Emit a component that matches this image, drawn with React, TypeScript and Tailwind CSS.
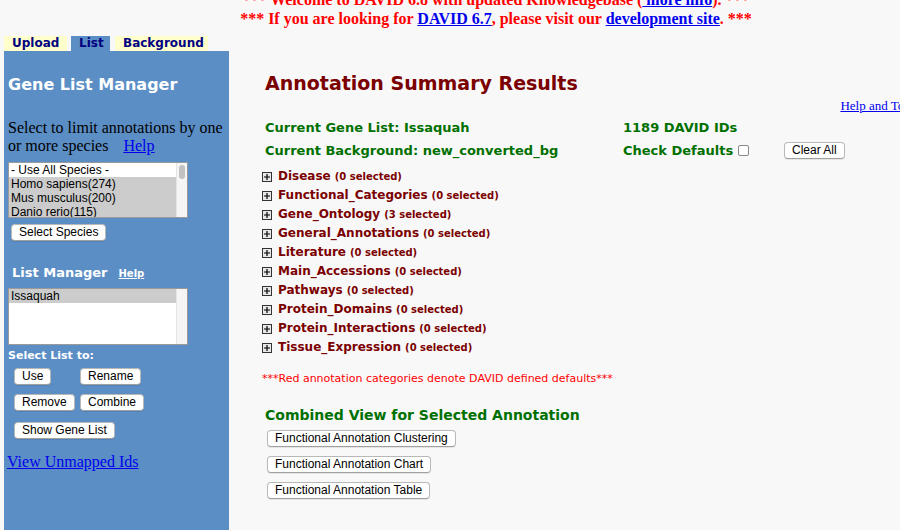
import React from "react";

const verdana = "font-['Verdana','DejaVu_Sans',sans-serif]";
const serif = "font-['Liberation_Serif','Times_New_Roman',serif]";
const helv = "font-['Liberation_Sans','Helvetica',sans-serif]";

const categories = [
  ["Disease", 0],
  ["Functional_Categories", 0],
  ["Gene_Ontology", 3],
  ["General_Annotations", 0],
  ["Literature", 0],
  ["Main_Accessions", 0],
  ["Pathways", 0],
  ["Protein_Domains", 0],
  ["Protein_Interactions", 0],
  ["Tissue_Expression", 0],
] as const;

function Btn({ label, className = "" }: { label: string; className?: string }) {
  return (
    <button
      className={`${helv} h-[17px] px-[7px] text-[12px] leading-[15px] font-normal text-black bg-white border border-[#b8b8b8] border-b-[#a0a0a0] rounded-[4px] shadow-[0_1px_0_rgba(0,0,0,0.08)] ${className}`}
    >
      {label}
    </button>
  );
}

function PlusBox() {
  return (
    <svg width="10" height="10" viewBox="0 0 10 10" className="shrink-0 self-center">
      <rect x="0.5" y="0.5" width="9" height="9" fill="#e8e8e8" stroke="#333" />
      <path d="M2 5h6M5 2v6" stroke="#000" strokeWidth="1.2" />
    </svg>
  );
}

export default function App() {
  return (
    <div className="w-[900px] h-[530px] overflow-hidden bg-[#f8f8f8] relative">
      {/* header notice */}
      <div className={`${serif} font-bold text-[16px] leading-[19px] text-[#ff0000] ml-[240px] w-[512px] text-center whitespace-nowrap -mt-[10px] h-[38px]`}>
        <div>
          *** Welcome to DAVID 6.8 with updated Knowledgebase (
          <a className="text-[#0000ee] underline"> more info</a>). ***
        </div>
        <div>
          *** If you are looking for <a className="text-[#0000ee] underline">DAVID 6.7</a>, please visit our{" "}
          <a className="text-[#0000ee] underline">development site</a>. ***
        </div>
      </div>

      <div className="flex mt-[8px]">
        {/* sidebar */}
        <div className="ml-[4px] w-[225px] shrink-0">
          <div className={`${verdana} flex items-end h-[15px] font-bold text-[12px] leading-[15px] text-[#000080]`}>
            <div className="bg-[#ffffcc] w-[63px] h-[15px] pl-[8px]">Upload</div>
            <div className="w-[4px]" />
            <div className="bg-[#5b8ec5] w-[39px] h-[15px] pl-[8px]">List</div>
            <div className="w-[5px]" />
            <div className="bg-[#ffffcc] w-[93px] h-[15px] pl-[8px]">Background</div>
          </div>
          <div className="bg-[#5b8ec5] h-[480px] pt-[24px]">
            <div className={`${verdana} font-bold text-[16px] leading-[20px] text-white pl-[4px]`}>Gene List Manager</div>
            <div className={`${serif} text-[16px] leading-[18px] text-black pl-[4px] mt-[24px]`}>
              Select to limit annotations by one
              <br />
              or more species
              <a className="text-[#0000ee] underline ml-[15px]">Help</a>
            </div>
            <div className={`${helv} ml-[4px] mt-[7px] w-[180px] h-[56px] border border-[#9a9a9a] bg-white flex text-[12px] leading-[14px]`}>
              <div className="flex-1">
                <div className="pl-[2px] bg-white">- Use All Species -</div>
                <div className="pl-[2px] bg-[#cccccc]">Homo sapiens(274)</div>
                <div className="pl-[2px] bg-[#cccccc]">Mus musculus(200)</div>
                <div className="pl-[2px] bg-[#cccccc] h-[12px] overflow-hidden">Danio rerio(115)</div>
              </div>
              <div className="w-[11px] bg-[#f5f5f5] border-l border-[#e4e4e4] pt-[2px] flex justify-center">
                <div className="w-[6px] h-[14px] rounded-[3px] bg-[#c2c2c2]" />
              </div>
            </div>
            <Btn label="Select Species" className="ml-[7px] mt-[6px]" />

            <div className="flex items-baseline pl-[8px] mt-[22px]">
              <span className={`${verdana} font-bold text-[13px] leading-[18px] text-white`}>List Manager</span>
              <a className={`${verdana} font-bold text-[10px] text-white underline ml-[11px]`}>Help</a>
            </div>
            <div className={`${helv} ml-[4px] mt-[6px] w-[180px] h-[57px] border border-[#9a9a9a] bg-white flex text-[12px] leading-[14px]`}>
              <div className="flex-1">
                <div className="pl-[2px] bg-[#cccccc]">Issaquah</div>
              </div>
              <div className="w-[11px] bg-[#f5f5f5] border-l border-[#e4e4e4]" />
            </div>
            <div className={`${verdana} font-bold text-[11px] leading-[13px] text-white pl-[4px] mt-[4px]`}>Select List to:</div>
            <div className="grid grid-cols-[66px_auto] gap-y-[9px] pl-[10px] mt-[6px] justify-start">
              <Btn label="Use" className="justify-self-start" />
              <Btn label="Rename" className="justify-self-start" />
              <Btn label="Remove" className="justify-self-start" />
              <Btn label="Combine" className="justify-self-start" />
            </div>
            <Btn label="Show Gene List" className="ml-[10px] mt-[11px]" />
            <div className={`${serif} text-[16px] leading-[18px] pl-[3px] mt-[13px]`}>
              <a className="text-[#0000ee] underline">View Unmapped Ids</a>
            </div>
          </div>
        </div>

        {/* main content */}
        <div className="flex-1 pl-[36px] relative">
          <div className={`${verdana} font-bold text-[19px] leading-[24px] text-[#7b0000] mt-[35px]`}>Annotation Summary Results</div>
          <a className={`${serif} absolute right-[-40px] top-[60px] text-[13px] text-[#0000ee] underline whitespace-nowrap`}>Help and Tool Tips</a>

          <div className={`${verdana} font-bold text-[13px] leading-[23px] text-[#007000] mt-[21px]`}>
            <div className="flex">
              <div className="w-[358px]">Current Gene List: Issaquah</div>
              <div>1189 DAVID IDs</div>
            </div>
            <div className="flex items-center">
              <div className="w-[358px]">Current Background: new_converted_bg</div>
              <div className="w-[161px] flex items-center">
                Check Defaults
                <span className="ml-[5px] w-[11px] h-[11px] border border-[#888] rounded-[2px] bg-white inline-block" />
              </div>
              <Btn label="Clear All" />
            </div>
          </div>

          <div className={`${verdana} mt-[5px] -ml-[3px]`}>
            {categories.map(([name, n]) => (
              <div key={name} className="flex items-baseline h-[19px] leading-[19px]">
                <PlusBox />
                <span className="ml-[6px] font-bold text-[12px] text-[#7b0000]">{name}</span>
                <span className="ml-[4px] font-bold text-[10px] text-[#7b0000]">({n} selected)</span>
              </div>
            ))}
          </div>

          <div className={`${verdana} text-[11px] text-[#ff0000] -ml-[3px] mt-[14px]`}>
            ***Red annotation categories denote DAVID defined defaults***
          </div>

          <div className={`${verdana} font-bold text-[14px] leading-[18px] text-[#007000] mt-[18px]`}>
            Combined View for Selected Annotation
          </div>
          <div className="flex flex-col items-start gap-[9px] mt-[6px] ml-[2px]">
            <Btn label="Functional Annotation Clustering" />
            <Btn label="Functional Annotation Chart" />
            <Btn label="Functional Annotation Table" />
          </div>
        </div>
      </div>
    </div>
  );
}
